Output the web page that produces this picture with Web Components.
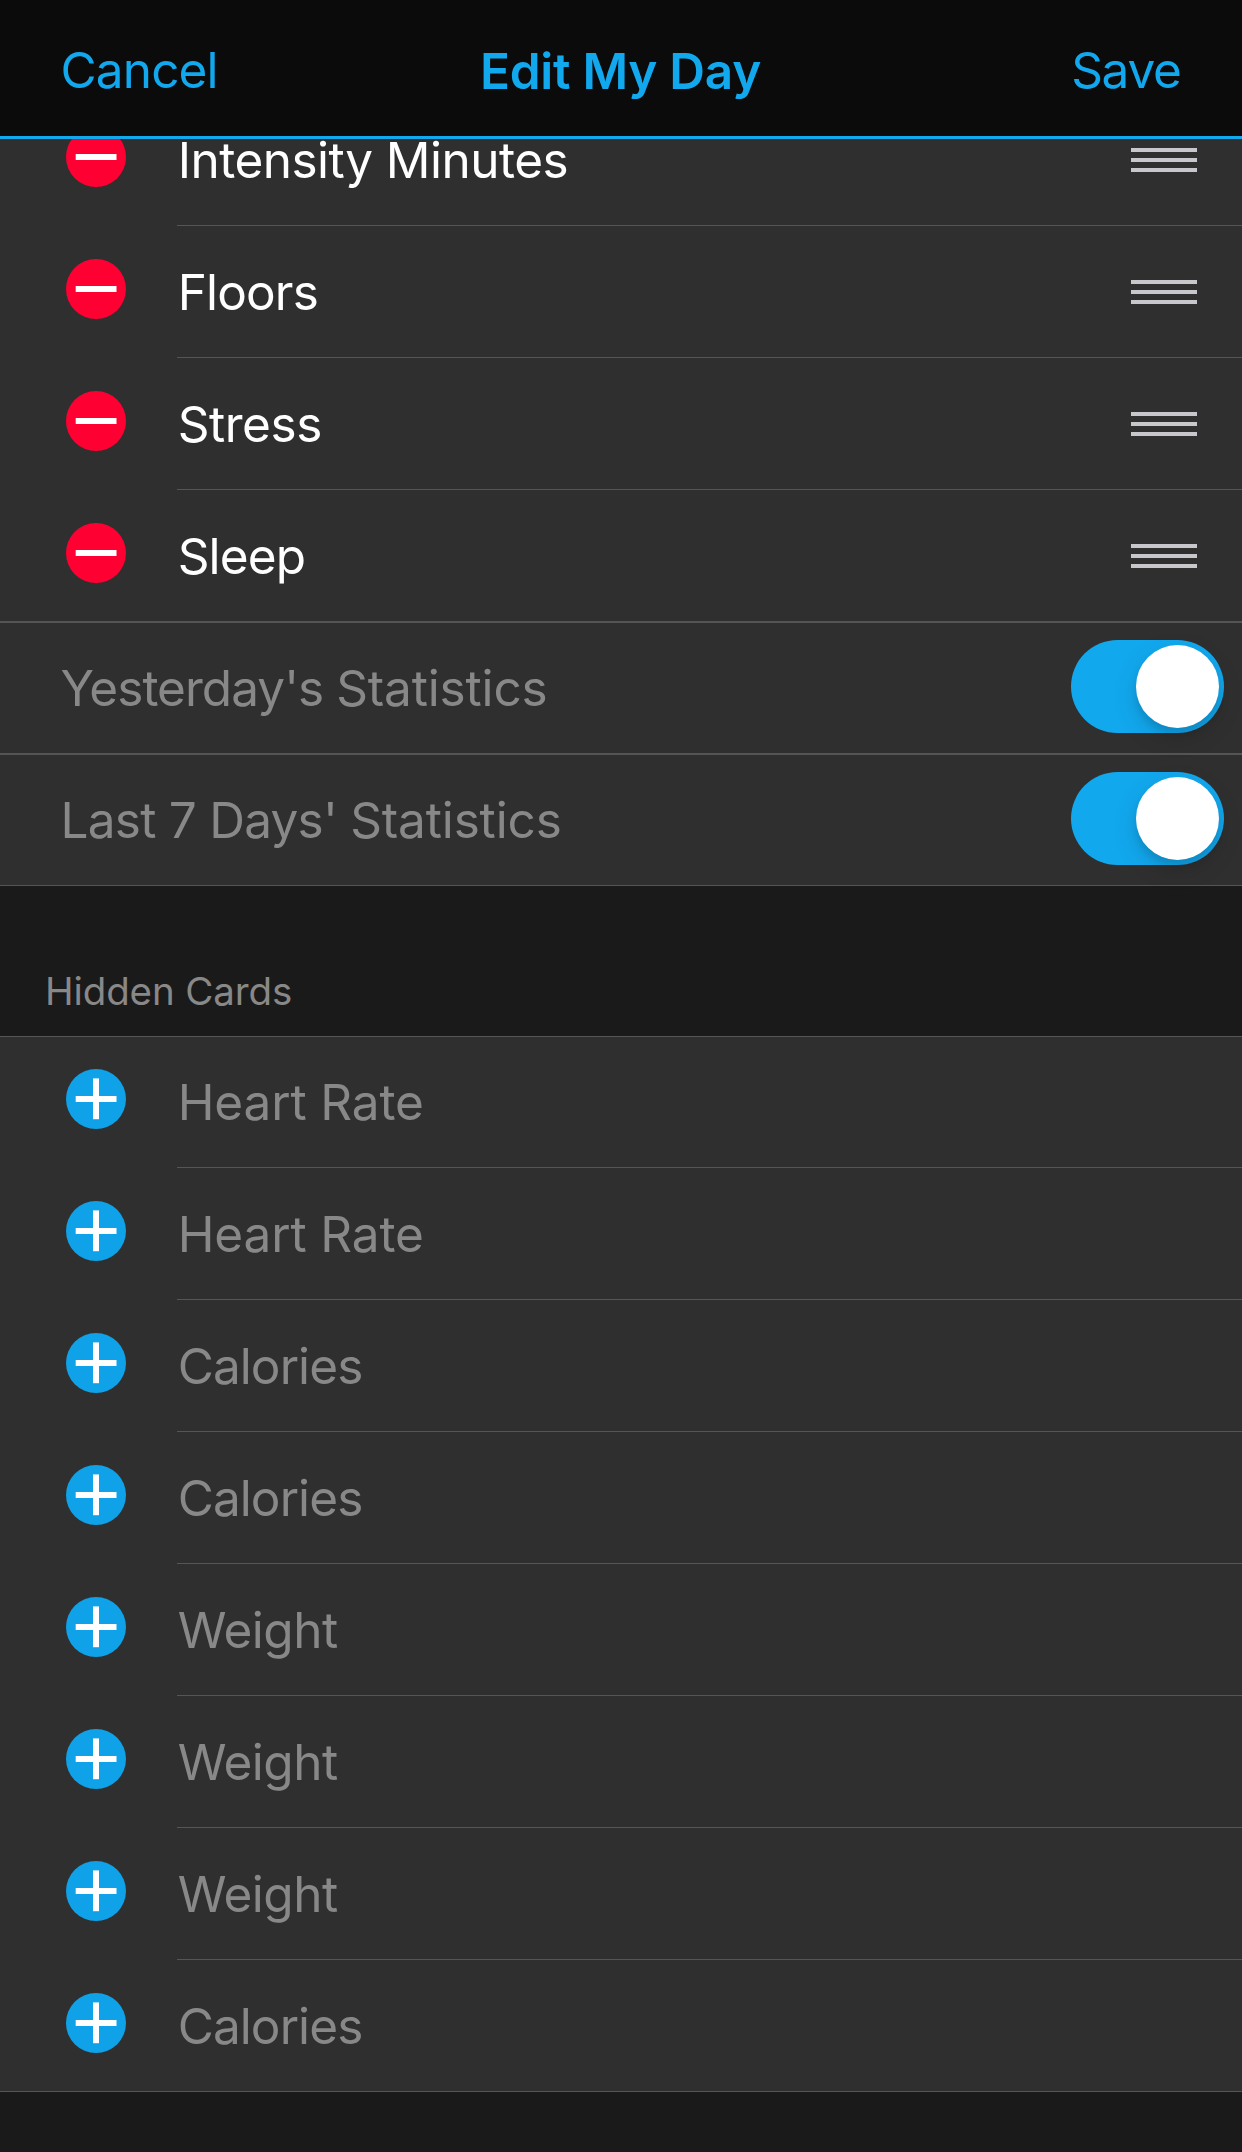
<!DOCTYPE html>
<html lang="en">
<head>
<meta charset="utf-8">
<title>Edit My Day</title>
<style>
    html, body { height: 100%; }
    body {
        margin: 0;
        background: #1a1a1a;
        color: #fff;
        font-family: Inter, "Liberation Sans", sans-serif;
        overflow: hidden;
        --accent: #12a8ee;
        --cell: #2f2f2f;
        --line: #555;
        --muted: #888;
    }
    switch-row span { letter-spacing: -.15px; }
</style>
</head>
<body>

<edit-screen>
    <nav-bar slot="header">
        <span slot="left" style="letter-spacing: -.85px">Cancel</span>
        <span slot="title" style="letter-spacing: -.25px">Edit My Day</span>
        <span slot="right" style="letter-spacing: -1.3px">Save</span>
    </nav-bar>

    <card-group scrolled>
        <card-row kind="remove" tracking="-.52">Intensity Minutes</card-row>
        <card-row kind="remove" tracking="-.85">Floors</card-row>
        <card-row kind="remove" tracking="-.45">Stress</card-row>
        <card-row kind="remove" tracking="-.87">Sleep</card-row>
    </card-group>
    <switch-row tracking="-.97">Yesterday's <span>Statistics</span></switch-row>
    <switch-row tracking="-.75">Last 7 Days' <span>Statistics</span></switch-row>

    <section-title>Hidden Cards</section-title>

    <card-group topline>
        <card-row kind="add" tracking="-.14">Heart Rate</card-row>
        <card-row kind="add" tracking="-.14">Heart Rate</card-row>
        <card-row kind="add" tracking="-.92">Calories</card-row>
        <card-row kind="add" tracking="-.92">Calories</card-row>
        <card-row kind="add" tracking="-.5">Weight</card-row>
        <card-row kind="add" tracking="-.5">Weight</card-row>
        <card-row kind="add" tracking="-.5">Weight</card-row>
        <card-row kind="add" tracking="-.92">Calories</card-row>
    </card-group>
</edit-screen>

<script>
class BaseElement extends HTMLElement {
    constructor() {
        super();
        this.attachShadow({mode: 'open'});
    }

    connectedCallback() {
        this.shadowRoot.innerHTML = this.render();
    }
}

// the whole screen: fixed header, list below it cuts off what is scrolled under the header
class EditScreen extends BaseElement {
    render() {
        return `
            <style>
                :host { display: flex; flex-direction: column; height: 100vh; }
                main { flex: 1; min-height: 0; overflow: hidden; }
            </style>
            <slot name="header"></slot>
            <main><slot></slot></main>
        `;
    }
}

class NavBar extends BaseElement {
    render() {
        return `
            <style>
                :host {
                    display: grid;
                    grid-template-columns: 1fr auto 1fr;
                    align-items: center;
                    box-sizing: border-box;
                    height: 139px;
                    padding: 4px 61.5px 0 60.5px;
                    background: #0b0b0b;
                    border-bottom: 3px solid var(--accent);
                    color: var(--accent);
                    font-size: 49.5px;
                    line-height: 60px;
                    white-space: nowrap;
                }
                .title { font-weight: 600; margin-top: 2px; }
                .right { text-align: right; }
            </style>
            <div><slot name="left"></slot></div>
            <div class="title"><slot name="title"></slot></div>
            <div class="right"><slot name="right"></slot></div>
        `;
    }
}

class CardGroup extends BaseElement {
    render() {
        return `
            <style>
                :host { display: flow-root; position: relative; }
                :host([scrolled]) { margin-top: -45px; }
                /* full width hairlines over the first and last row */
                .lines { position: absolute; inset: 0; border-bottom: 1px solid var(--line); }
                :host([topline]) .lines { border-top: 1px solid var(--line); }
            </style>
            <slot></slot>
            <div class="lines"></div>
        `;
    }
}

class RoundIcon extends BaseElement {
    render() {
        const add = this.getAttribute('kind') === 'add';
        return `
            <style>
                :host { display: block; width: 60px; height: 60px; }
                svg { display: block; }
            </style>
            <svg width="60" height="60" viewBox="0 0 60 60">
                <circle cx="30" cy="30" r="30" fill="${add ? '#10a2e8' : '#ff0033'}"/>
                <rect x="9.7" y="27" width="40.8" height="6" fill="#fff"/>
                ${add ? '<rect x="27" y="9.4" width="6" height="40.8" fill="#fff"/>' : ''}
            </svg>
        `;
    }
}

class DragHandle extends BaseElement {
    render() {
        return `
            <style>
                :host { display: flex; flex-direction: column; gap: 6px; width: 66px; }
                i { height: 4px; background: #c8c7cc; }
            </style>
            <i></i><i></i><i></i>
        `;
    }
}

class CardRow extends BaseElement {
    render() {
        const kind = this.getAttribute('kind');
        return `
            <style>
                :host {
                    display: flex;
                    align-items: center;
                    height: 132px;
                    padding-left: 66px;
                    background: var(--cell);
                    font-size: 49.5px;
                    line-height: 60px;
                    color: ${kind === 'add' ? 'var(--muted)' : '#fff'};
                }
                round-icon { margin: 0 51px 6px 0; }
                .body {
                    flex: 1;
                    display: flex;
                    align-items: center;
                    justify-content: space-between;
                    height: 100%;
                    padding: 0 45px 0 .7px;
                    box-shadow: inset 0 -1px var(--line);
                }
                .label { letter-spacing: ${this.getAttribute('tracking')}px; }
            </style>
            <round-icon kind="${kind}"></round-icon>
            <div class="body">
                <span class="label"><slot></slot></span>
                ${kind === 'remove' ? '<drag-handle></drag-handle>' : ''}
            </div>
        `;
    }
}

class ToggleSwitch extends BaseElement {
    render() {
        return `
            <style>
                :host {
                    display: flex;
                    align-items: center;
                    justify-content: flex-end;
                    box-sizing: border-box;
                    width: 153px;
                    height: 93px;
                    padding: 0 5px 1px 0;
                    border-radius: 47px;
                    background: var(--accent);
                }
                .thumb {
                    width: 83px;
                    height: 83px;
                    border-radius: 50%;
                    background: #fff;
                    box-shadow: 0 9px 24px rgba(0, 0, 0, .15), 0 6px 6px rgba(0, 0, 0, .08);
                }
            </style>
            <div class="thumb"></div>
        `;
    }
}

class SwitchRow extends BaseElement {
    render() {
        return `
            <style>
                :host {
                    display: flex;
                    align-items: center;
                    justify-content: space-between;
                    height: 132px;
                    padding: 0 18px 0 60.5px;
                    background: var(--cell);
                    box-shadow: inset 0 1px var(--line), inset 0 -1px var(--line);
                    color: var(--muted);
                    font-size: 49.5px;
                    line-height: 60px;
                }
                .label { letter-spacing: ${this.getAttribute('tracking')}px; }
                toggle-switch { margin-bottom: 3px; }
            </style>
            <span class="label"><slot></slot></span>
            <toggle-switch></toggle-switch>
        `;
    }
}

class SectionTitle extends BaseElement {
    render() {
        return `
            <style>
                :host {
                    display: flex;
                    align-items: flex-end;
                    box-sizing: border-box;
                    height: 150px;
                    padding: 0 45px 22px;
                    color: var(--muted);
                    font-size: 38.5px;
                    line-height: 46px;
                    letter-spacing: -.12px;
                }
            </style>
            <slot></slot>
        `;
    }
}

customElements.define('edit-screen', EditScreen);
customElements.define('nav-bar', NavBar);
customElements.define('card-group', CardGroup);
customElements.define('round-icon', RoundIcon);
customElements.define('drag-handle', DragHandle);
customElements.define('card-row', CardRow);
customElements.define('toggle-switch', ToggleSwitch);
customElements.define('switch-row', SwitchRow);
customElements.define('section-title', SectionTitle);
</script>
</body>
</html>
